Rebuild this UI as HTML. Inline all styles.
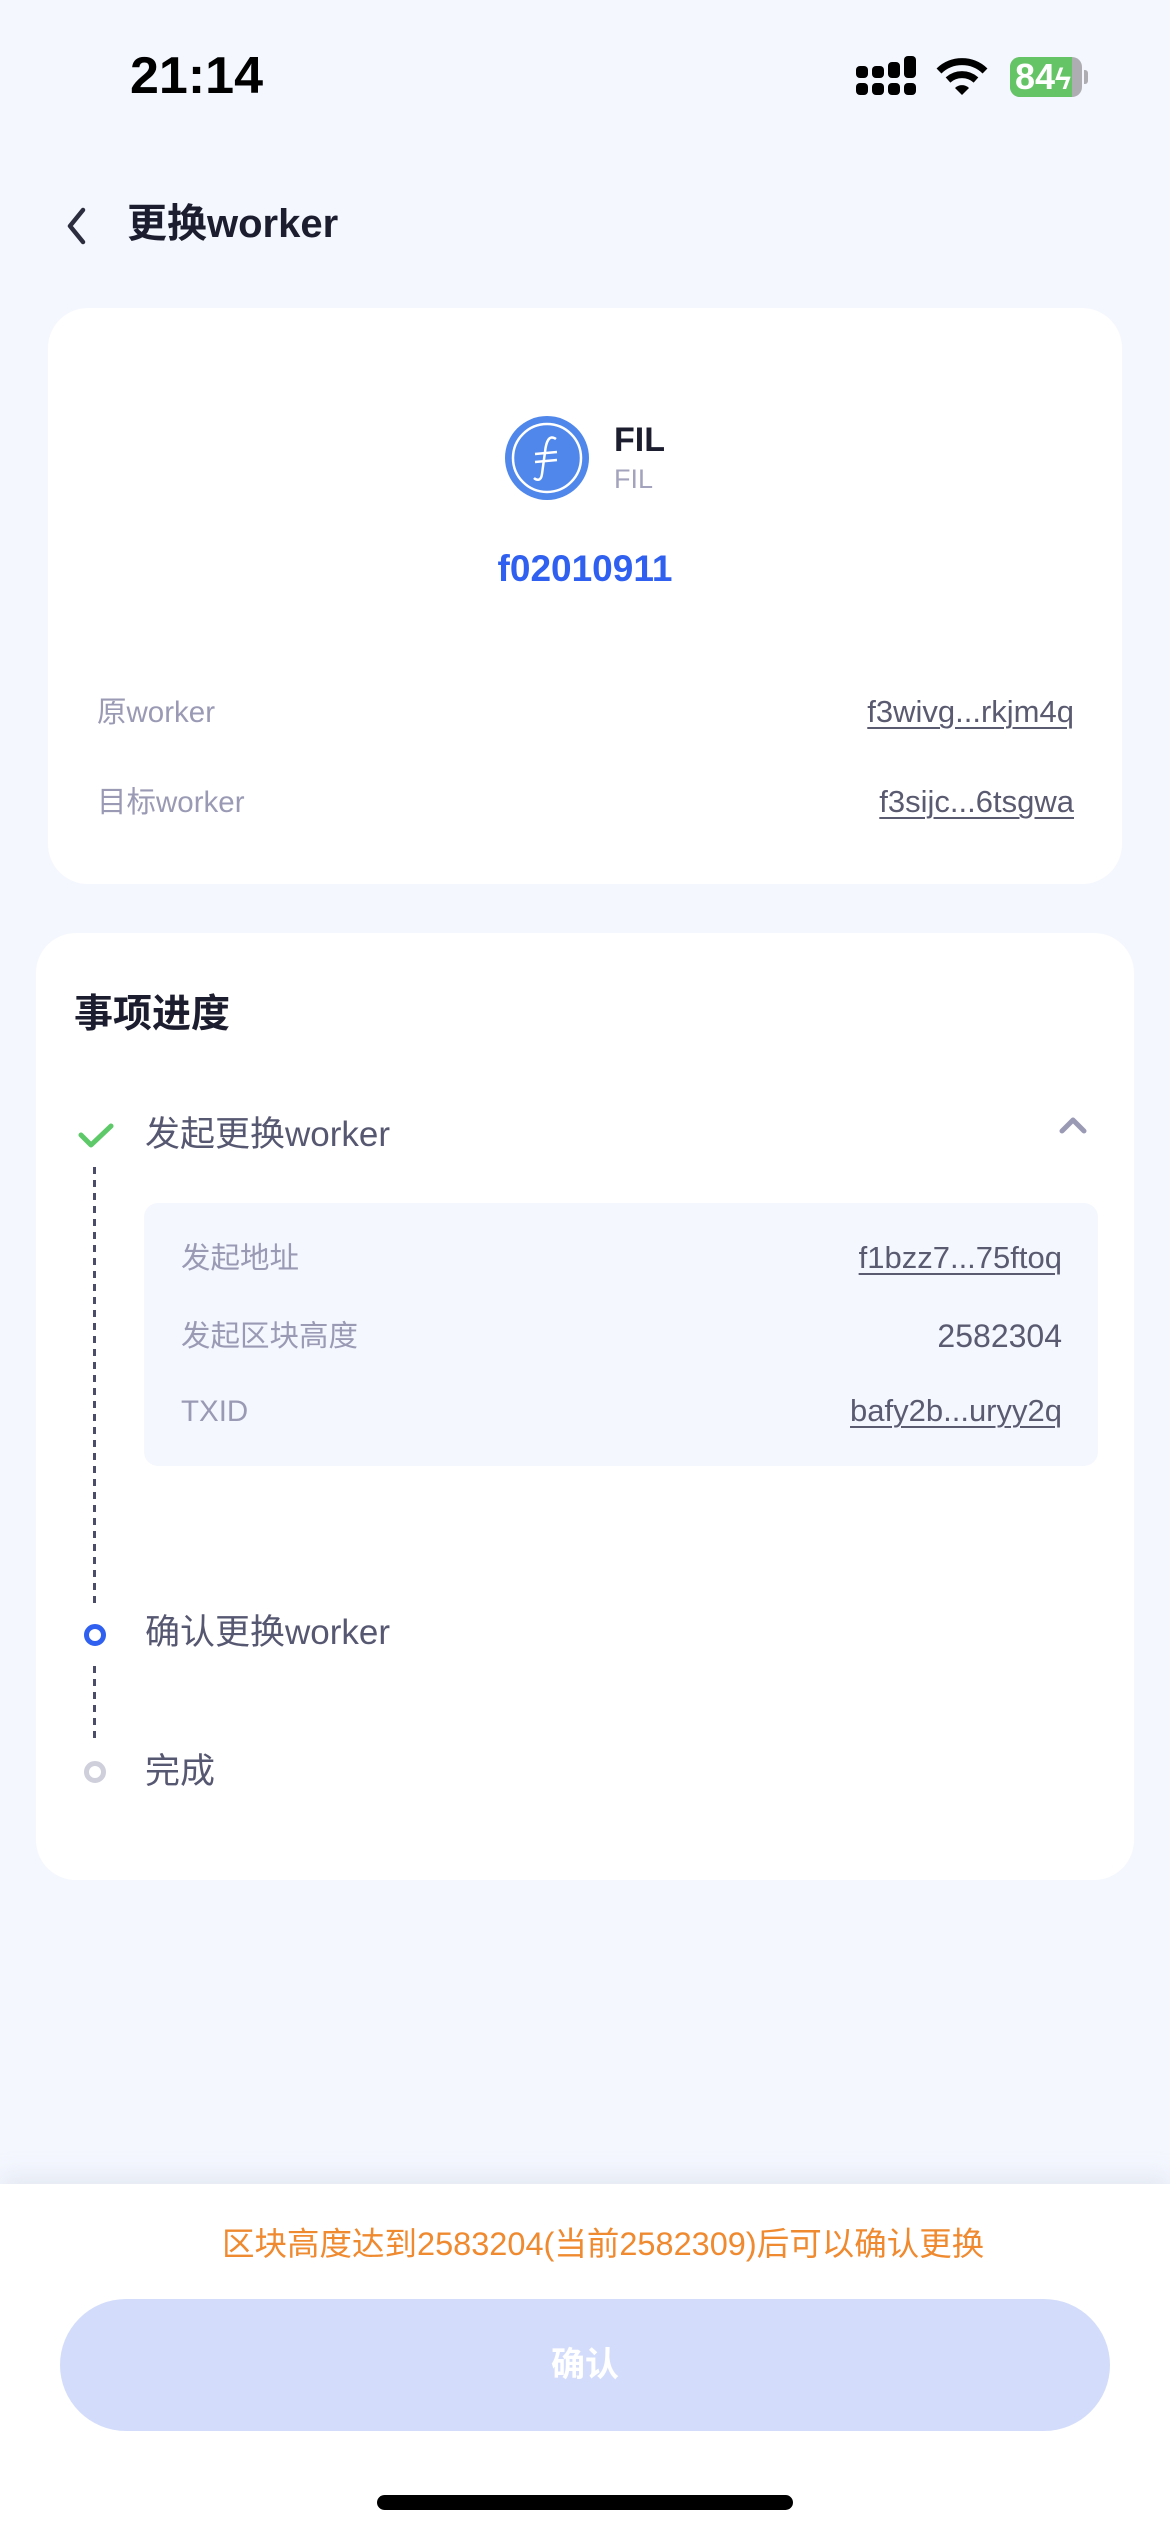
<!DOCTYPE html>
<html><head><meta charset="utf-8"><style>
*{margin:0;padding:0;box-sizing:border-box}
body{width:1170px;height:2532px;background:#f4f7fe;position:relative;overflow:hidden;font-family:"Liberation Sans","Noto Sans CJK SC",sans-serif}
.a{position:absolute;white-space:nowrap}
.card{position:absolute;background:#fff;border-radius:40px}
.lbl{color:#9a9ab5;font-size:29.5px;line-height:40px}
.val{color:#5a5a70;font-size:31px;line-height:40px;text-decoration:underline;text-underline-offset:5px;text-decoration-thickness:2px}
.dash{position:absolute;left:93px;width:3px;background:repeating-linear-gradient(#4a4c68 0 7px,transparent 7px 13px)}
</style></head><body>
<div class="a" style="left:130px;top:46px;font-size:52px;font-weight:bold;color:#000;line-height:60px">21:14</div>
<svg class="a" style="left:854px;top:56px" width="62" height="42" viewBox="0 0 62 42">
<g fill="#000"><rect x="2" y="10" width="12" height="12" rx="4"/><rect x="18" y="10" width="12" height="12" rx="4"/><rect x="34" y="6" width="12" height="16" rx="4"/><rect x="50" y="0" width="12" height="22" rx="4"/>
<rect x="2" y="27" width="12" height="12" rx="4"/><rect x="18" y="27" width="12" height="12" rx="4"/><rect x="34" y="27" width="12" height="12" rx="4"/><rect x="50" y="27" width="12" height="12" rx="4"/></g></svg>
<svg class="a" style="left:936px;top:58px" width="52" height="40" viewBox="0 0 52 40">
<path d="M3 13 A33 33 0 0 1 49 13" stroke="#000" stroke-width="7" fill="none"/>
<path d="M12 22 A21 21 0 0 1 40 22" stroke="#000" stroke-width="7" fill="none"/>
<path d="M19 30 L26 37 L33 30 A10 10 0 0 0 19 30Z" fill="#000"/></svg>
<div class="a" style="left:1010px;top:57px;width:72px;height:40px;border-radius:10px;background:#adadb2;overflow:hidden"><div style="width:62px;height:40px;background:#65c466"></div></div>
<div class="a" style="left:1084px;top:70px;width:4px;height:14px;background:#adadb2;border-radius:0 3px 3px 0"></div>
<div class="a" style="left:1015px;top:56px;font-size:36px;font-weight:bold;color:#fff;line-height:42px">84<span style="font-size:30px">ϟ</span></div>

<svg class="a" style="left:62px;top:204px" width="30" height="44" viewBox="0 0 30 44"><path d="M21 6 L8 22 L21 38" stroke="#2c2d3e" stroke-width="4.5" fill="none" stroke-linecap="round" stroke-linejoin="round"/></svg>
<div class="a" style="left:127px;top:200px;font-size:40px;color:#1c1d2e;line-height:48px;font-weight:bold">更换worker</div>

<div class="card" style="left:48px;top:308px;width:1074px;height:576px"></div>
<svg class="a" style="left:505px;top:416px" width="84" height="84" viewBox="0 0 84 84">
<circle cx="42" cy="42" r="42" fill="#5087ea"/><circle cx="42" cy="42" r="34" fill="none" stroke="#fff" stroke-width="2.5"/>
<path d="M51 23 C44 18 41 26 40 36 L37 58 C36 66 31 64 29 62" stroke="#fff" stroke-width="2.5" fill="none"/>
<path d="M30 38 L52 36 M30 46 L52 44" stroke="#fff" stroke-width="2.5"/></svg>
<div class="a" style="left:614px;top:421px;font-size:34px;font-weight:bold;color:#1c1d2e">FIL</div>
<div class="a" style="left:614px;top:464px;font-size:27px;color:#a3a3bd">FIL</div>
<div class="a" style="left:0;width:1170px;text-align:center;top:548px;font-size:37px;font-weight:bold;color:#2f60f0">f02010911</div>
<div class="a lbl" style="left:97px;top:693px">原worker</div>
<div class="a val" style="right:96px;top:692px">f3wivg...rkjm4q</div>
<div class="a lbl" style="left:97px;top:783px">目标worker</div>
<div class="a val" style="right:96px;top:782px">f3sijc...6tsgwa</div>

<div class="card" style="left:36px;top:933px;width:1098px;height:947px"></div>
<div class="a" style="left:74px;top:983px;font-size:39px;font-weight:bold;color:#1c1d2e">事项进度</div>
<svg class="a" style="left:78px;top:1122px" width="36" height="28" viewBox="0 0 36 28"><path d="M3 13 L13 23 L33 4" stroke="#5dc968" stroke-width="5" fill="none" stroke-linecap="round" stroke-linejoin="round"/></svg>
<div class="a" style="left:145px;top:1106px;font-size:35px;color:#565771">发起更换worker</div>
<svg class="a" style="left:1056px;top:1113px" width="34" height="24" viewBox="0 0 34 24"><path d="M6 18 L17 7 L28 18" stroke="#9a9ab5" stroke-width="5" fill="none" stroke-linecap="round" stroke-linejoin="round"/></svg>
<div class="dash" style="top:1167px;height:440px"></div>
<div class="a" style="left:144px;top:1203px;width:954px;height:263px;background:#f4f7fe;border-radius:14px"></div>
<div class="a lbl" style="left:181px;top:1239px">发起地址</div>
<div class="a val" style="right:108px;top:1238px">f1bzz7...75ftoq</div>
<div class="a lbl" style="left:181px;top:1317px">发起区块高度</div>
<div class="a" style="right:108px;top:1316px;font-size:32px;line-height:40px;color:#5a5a70">2582304</div>
<div class="a lbl" style="left:181px;top:1392px">TXID</div>
<div class="a val" style="right:108px;top:1391px">bafy2b...uryy2q</div>
<div class="a" style="left:84px;top:1624px;width:22px;height:22px;border-radius:50%;border:5px solid #2f60f0;background:#fff"></div>
<div class="a" style="left:145px;top:1604px;font-size:35px;color:#565771">确认更换worker</div>
<div class="dash" style="top:1666px;height:78px"></div>
<div class="a" style="left:84px;top:1761px;width:22px;height:22px;border-radius:50%;border:5px solid #cfcfdc;background:#fff"></div>
<div class="a" style="left:145px;top:1743px;font-size:35px;color:#565771">完成</div>

<div class="a" style="left:0;top:2184px;width:1170px;height:348px;background:#fff;box-shadow:0 -8px 20px rgba(200,205,220,0.35)"></div>
<div class="a" style="left:222px;top:2218px;font-size:32.5px;color:#ef8a30">区块高度达到2583204(当前2582309)后可以确认更换</div>
<div class="a" style="left:60px;top:2299px;width:1050px;height:132px;border-radius:66px;background:#d3ddfb;color:#fff;font-size:34px;font-weight:bold;text-align:center;line-height:132px">确认</div>
<div class="a" style="left:377px;top:2495px;width:416px;height:15px;border-radius:8px;background:#000"></div>
</body></html>
